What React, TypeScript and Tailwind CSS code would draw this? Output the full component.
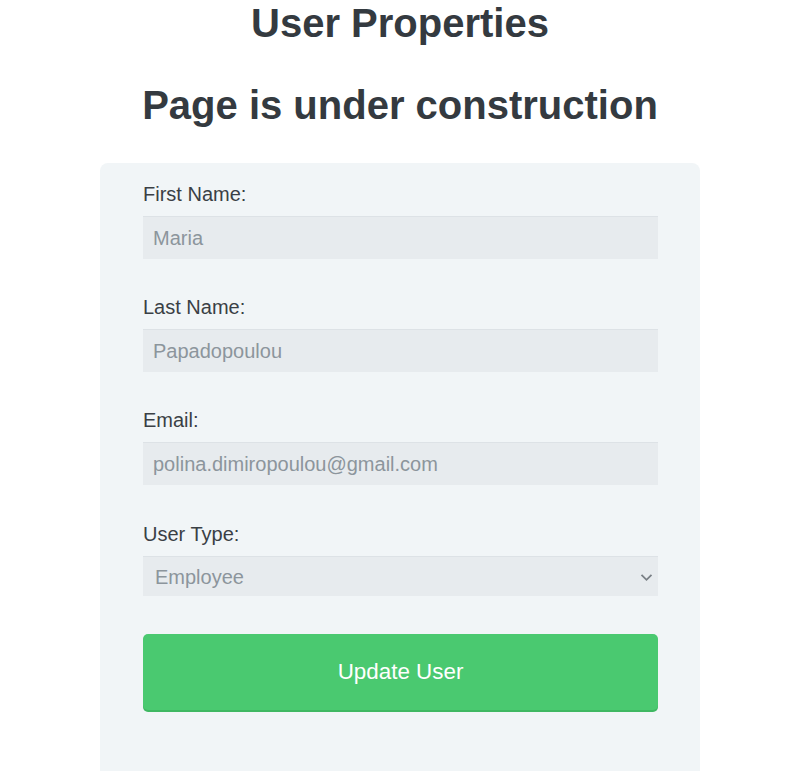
import React from "react"

const fields = [
  { label: "First Name:", value: "Maria", gap: "mb-[37px]" },
  { label: "Last Name:", value: "Papadopoulou", gap: "mb-[37px]" },
  { label: "Email:", value: "polina.dimiropoulou@gmail.com", gap: "mb-[38px]" },
]

const App: React.FC = () => {
  return (
    <div className="w-full overflow-hidden bg-white font-['Liberation_Sans',Arial,sans-serif]">
      <div className="w-[800px] text-center">
        <h1 className="text-[40px] leading-[46px] font-bold text-[#343a40]">
          User Properties
        </h1>
        <h1 className="mt-[36px] text-[40px] leading-[46px] font-bold text-[#343a40]">
          Page is under construction
        </h1>
        <div className="mx-auto mt-[35px] w-[600px] rounded-t-lg bg-[#f1f5f7] pl-[43px] pr-[42px] pt-[20px] pb-[61px] text-left">
          {fields.map((f) => (
            <div key={f.label} className={f.gap}>
              <label className="block text-[20px] leading-[23px] text-[#3a3f45]">
                {f.label}
              </label>
              <div className="mt-[10px] flex h-[43px] items-center border-t border-[#dde2e6] bg-[#e7ebee] px-[10px] text-[20px] text-[#8c959c]">
                {f.value}
              </div>
            </div>
          ))}
          <div className="mb-[38px]">
            <label className="block text-[20px] leading-[23px] text-[#3a3f45]">
              User Type:
            </label>
            <div className="mt-[10px] flex h-[40px] items-center justify-between border-t border-[#dde2e6] bg-[#e7ebee] pl-[12px] pr-[5px] text-[20px] text-[#8c959c]">
              <span>Employee</span>
              <svg width="13" height="9" viewBox="0 0 13 9" className="mt-[1px]">
                <path d="M1.5 1.8 L6.5 6.8 L11.5 1.8" fill="none" stroke="#7a8086" strokeWidth="1.8" />
              </svg>
            </div>
          </div>
          <button className="flex h-[76px] w-full items-center justify-center rounded-[5px] bg-[#4ac970] text-[22.4px] text-white shadow-[0_2px_0_#3fb862]">
            Update User
          </button>
        </div>
      </div>
    </div>
  )
}

export default App
